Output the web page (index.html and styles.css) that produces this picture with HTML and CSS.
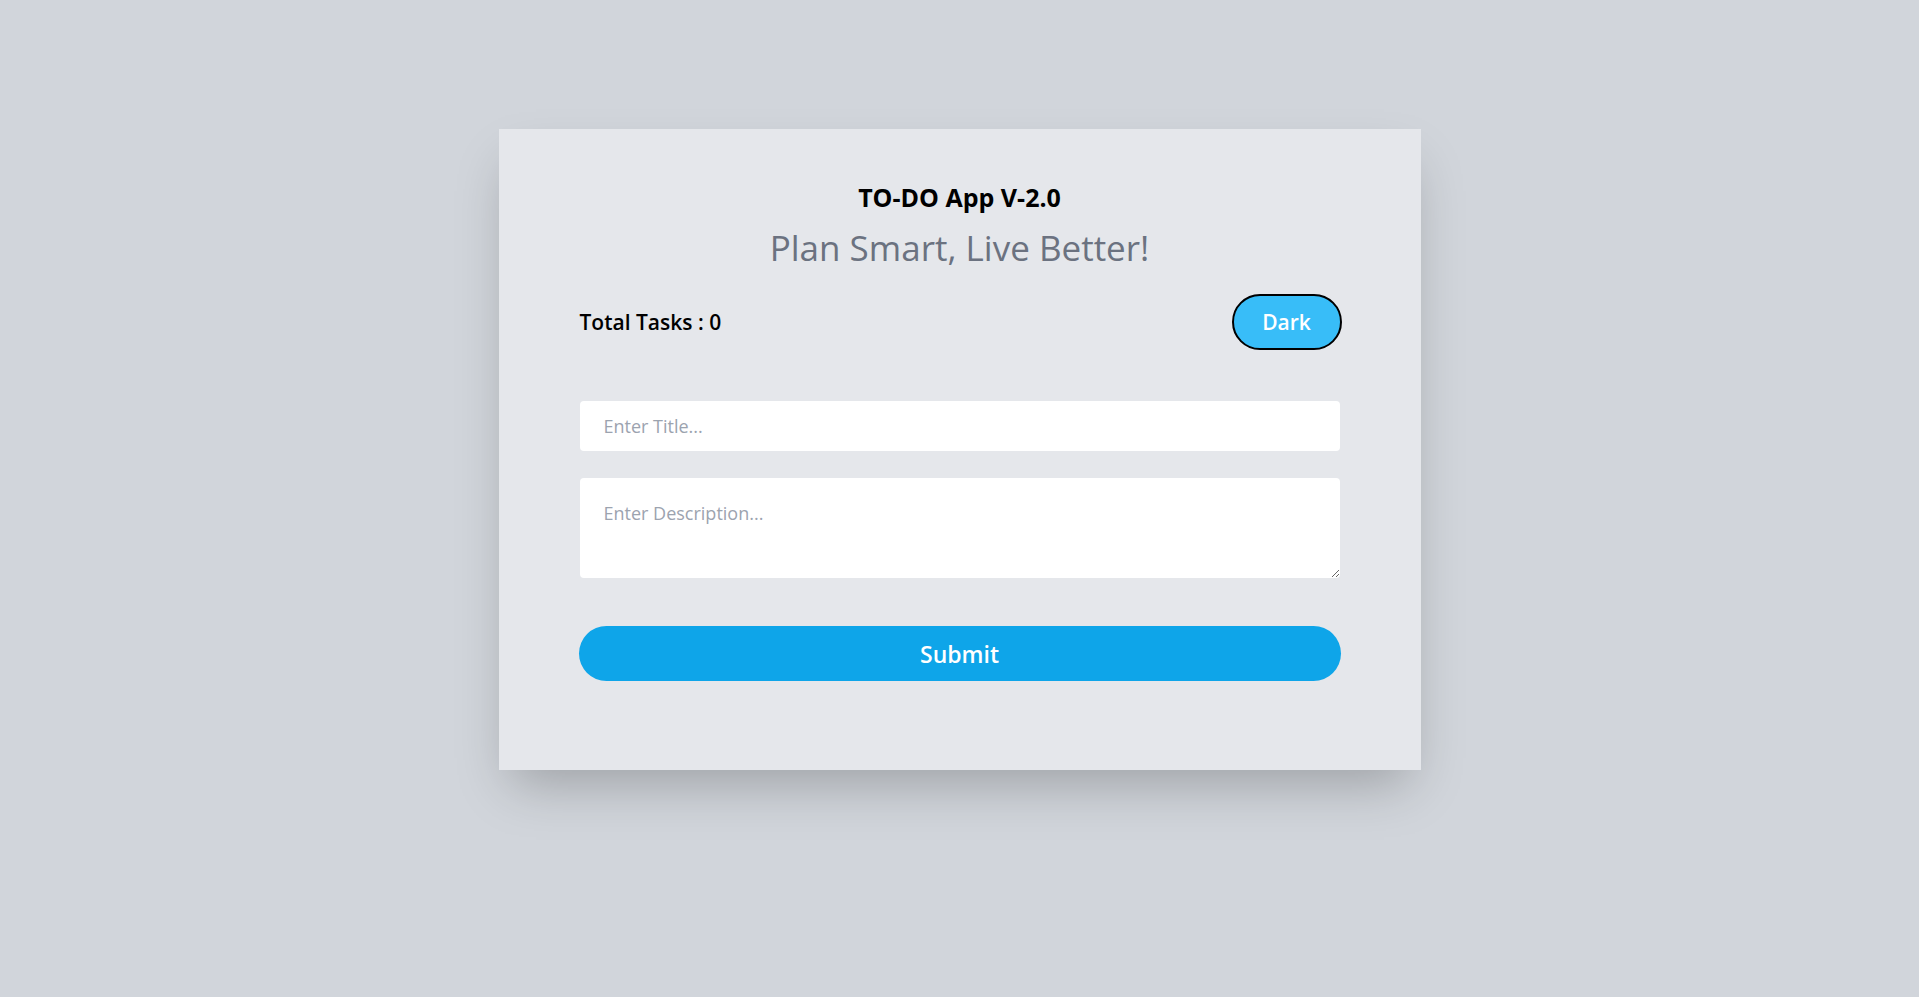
FILE: index.html
```html
<!DOCTYPE html>
<html lang="en">
<head>
<meta charset="utf-8">
<title>TO-DO App V-2.0</title>
<link rel="stylesheet" href="styles.css">
</head>
<body>
<main class="page">
  <section class="card">
    <h1 class="title">TO-DO App V-2.0</h1>
    <p class="subtitle">Plan Smart, Live Better!</p>
    <div class="stats">
      <span class="total">Total Tasks : 0</span>
      <button class="theme-btn" type="button">Dark</button>
    </div>
    <form class="task-form">
      <input class="field field-title" type="text" placeholder="Enter Title...">
      <textarea class="field field-desc" placeholder="Enter Description..."></textarea>
      <button class="submit-btn" type="submit">Submit</button>
    </form>
  </section>
</main>
</body>
</html>
```
FILE: styles.css
```css
* { box-sizing: border-box; }
html, body { margin: 0; padding: 0; }
body {
  background: #d1d5db;
  font-family: "Open Sans", "Noto Sans", "Liberation Sans", sans-serif;
  min-height: 997px;
}
.page {
  display: flex;
  justify-content: center;
  padding-top: 129px;
}
.card {
  width: 922px;
  height: 641px;
  background: #e5e7eb;
  box-shadow: 0 25px 50px -12px rgba(0,0,0,0.25);
  padding: 52px 81px 0 81px;
  display: flex;
  flex-direction: column;
}
.title {
  margin: 0;
  font-size: 25px;
  line-height: 32px;
  font-weight: 700;
  text-align: center;
  color: #000;
}
.subtitle {
  margin: 15px 0 0;
  font-size: 35px;
  line-height: 40px;
  font-weight: 400;
  text-align: center;
  color: #6b7280;
}
.stats {
  margin-top: 26px;
  display: flex;
  justify-content: space-between;
  align-items: center;
  height: 56px;
}
.total {
  font-size: 21px;
  font-weight: 600;
  color: #000;
}
.theme-btn {
  width: 110px;
  height: 56px;
  border: 2px solid #000;
  border-radius: 9999px;
  background: #38bdf8;
  color: #fff;
  font-family: inherit;
  font-size: 21px;
  font-weight: 600;
  margin-right: -2px;
  padding: 0;
}
.task-form {
  margin-top: 51px;
  display: flex;
  flex-direction: column;
}
.field {
  display: block;
  width: 760px;
  border: none;
  background: #fff;
  border-radius: 4px;
  font-family: inherit;
  font-size: 18px;
  color: #111827;
  padding: 0 24px;
  outline: none;
}
.field::placeholder { color: #9ca3af; }
.field-title { height: 50px; }
.field-desc {
  margin-top: 27px;
  height: 100px;
  padding-top: 21px;
  line-height: 28px;
  resize: vertical;
}
.submit-btn {
  margin-top: 48px;
  margin-left: -1px;
  width: 762px;
  height: 55px;
  border: none;
  border-radius: 9999px;
  background: #0ea5e9;
  color: #fff;
  font-family: inherit;
  font-size: 23px;
  font-weight: 600;
  padding: 0;
}
```
